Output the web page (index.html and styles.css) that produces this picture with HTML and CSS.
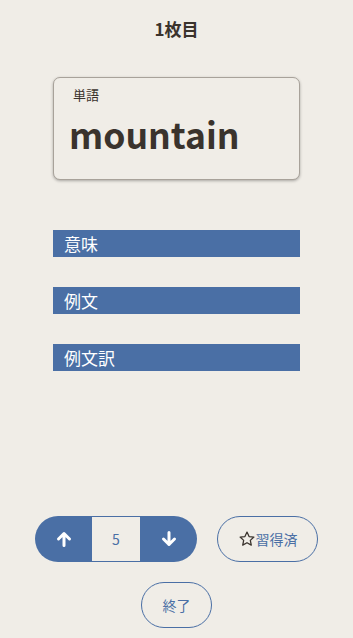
FILE: index.html
```html
<!DOCTYPE html>
<html lang="ja">
<head>
<meta charset="utf-8">
<link rel="stylesheet" href="styles.css">
</head>
<body>
<div class="page">
  <h1 class="title">1枚目</h1>
  <div class="card">
    <div class="card-label">単語</div>
    <div class="card-word">mountain</div>
  </div>
  <div class="bars">
    <div class="bar">意味</div>
    <div class="bar">例文</div>
    <div class="bar">例文訳</div>
  </div>
  <div class="spacer"></div>
  <div class="controls">
    <div class="seg">
      <button class="seg-btn" aria-label="上へ">
        <svg width="18" height="18" viewBox="0 0 18 18"><path d="M9 15.5V3.5M3.5 9L9 3.5 14.5 9" fill="none" stroke="#fff" stroke-width="3" stroke-linecap="round" stroke-linejoin="round"/></svg>
      </button>
      <div class="seg-num">5</div>
      <button class="seg-btn" aria-label="下へ">
        <svg width="18" height="18" viewBox="0 0 18 18"><path d="M9 2.5V14.5M3.5 9L9 14.5 14.5 9" fill="none" stroke="#fff" stroke-width="3" stroke-linecap="round" stroke-linejoin="round"/></svg>
      </button>
    </div>
    <button class="pill learned"><svg class="star" width="18" height="18" viewBox="0 0 24 24"><path d="M12 2.8l2.75 5.9 6.45.75-4.78 4.4 1.3 6.37L12 17l-5.72 3.22 1.3-6.37L2.8 9.45l6.45-.75z" fill="none" stroke="#3a332d" stroke-width="1.7" stroke-linejoin="round"/></svg>習得済</button>
  </div>
  <div class="end-row">
    <button class="pill end">終了</button>
  </div>
</div>
</body>
</html>
```
FILE: styles.css
```css
html, body {
  margin: 0;
  padding: 0;
  background: #f0ede7;
}
body {
  font-family: "Noto Sans CJK JP", "Noto Sans", sans-serif;
  color: #3a332d;
  width: 353px;
  height: 638px;
  overflow: hidden;
}
.page {
  display: flex;
  flex-direction: column;
  height: 638px;
  box-sizing: border-box;
  padding-top: 16px;
}
.title {
  margin: 0;
  text-align: center;
  font-size: 17px;
  font-weight: 700;
  line-height: 26px;
}
.card {
  margin: 35px 0 0 53px;
  width: 247px;
  height: 103px;
  box-sizing: border-box;
  border: 1px solid #a8a29a;
  border-radius: 7px;
  box-shadow: 0 1px 3px rgba(0,0,0,0.3);
  padding: 8px 0 0 19px;
  background: #f0ede7;
}
.card-label {
  font-size: 13px;
  line-height: 18px;
  color: #3a332d;
}
.card-word {
  font-size: 35.5px;
  font-weight: 700;
  line-height: 44px;
  margin-top: 8px;
  margin-left: -4px;
}
.bars {
  display: flex;
  flex-direction: column;
  gap: 30px;
  margin: 50px 0 0 53px;
  width: 247px;
}
.bar {
  background: #4a6fa5;
  color: #fff;
  height: 27px;
  font-size: 17px;
  line-height: 27px;
  padding-left: 11px;
}
.spacer {
  flex: 1;
}
.controls {
  display: flex;
  align-items: center;
  margin-left: 35px;
  gap: 20px;
}
.seg {
  display: flex;
  height: 46px;
  width: 162px;
  background: #4a6fa5;
  border-radius: 23px;
  box-sizing: border-box;
  padding: 1px 0;
}
.seg-btn {
  width: 57px;
  border: none;
  background: transparent;
  padding: 0;
  display: flex;
  align-items: center;
  justify-content: center;
}
.seg-btn:first-child {
  padding-left: 0;
}
.seg-num {
  width: 48px;
  background: #f0ede7;
  color: #4a6fa5;
  font-size: 14px;
  display: flex;
  align-items: center;
  justify-content: center;
}
.pill {
  font-family: "Noto Sans CJK JP", "Noto Sans", sans-serif;
  border: 1px solid #4a6fa5;
  background: transparent;
  border-radius: 23px;
  height: 46px;
  color: #4a6fa5;
  font-size: 14px;
  padding: 0;
  display: flex;
  align-items: center;
  justify-content: center;
}
.learned {
  width: 101px;
}
.star {
  display: block;
  margin-top: -1px;
}
.end-row {
  display: flex;
  justify-content: center;
  margin: 20px 0 10px;
}
.end {
  width: 71px;
}
```
